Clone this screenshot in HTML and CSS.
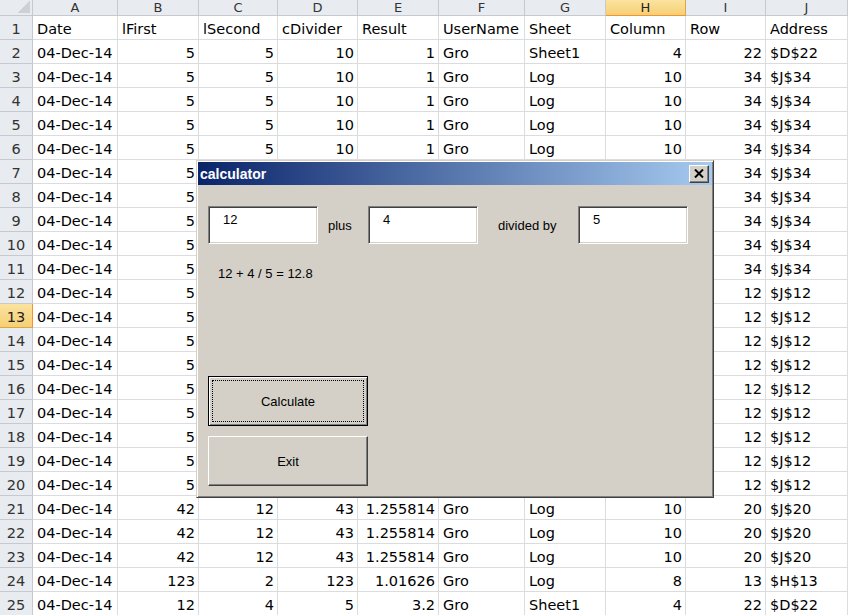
FILE: index.html
```html
<!DOCTYPE html>
<html lang="en">
<head>
    <meta charset="UTF-8">
    <meta name="viewport" content="width=device-width, initial-scale=1.0">
    <title>calculator</title>
    <link rel="stylesheet" href="styles.css">
</head>
<body>
    <div class="sheet">
        <div class="row"><div class="hd corner"></div><div class="hd">A</div><div class="hd">B</div><div class="hd">C</div><div class="hd">D</div><div class="hd">E</div><div class="hd">F</div><div class="hd">G</div><div class="hd sel">H</div><div class="hd">I</div><div class="hd">J</div></div>
        <div class="row"><div class="rh">1</div><div class="c">Date</div><div class="c">lFirst</div><div class="c">lSecond</div><div class="c">cDivider</div><div class="c">Result</div><div class="c">UserName</div><div class="c">Sheet</div><div class="c">Column</div><div class="c">Row</div><div class="c">Address</div></div>
        <div class="row"><div class="rh">2</div><div class="c">04-Dec-14</div><div class="c n">5</div><div class="c n">5</div><div class="c n">10</div><div class="c n">1</div><div class="c">Gro</div><div class="c">Sheet1</div><div class="c n">4</div><div class="c n">22</div><div class="c">$D$22</div></div>
        <div class="row"><div class="rh">3</div><div class="c">04-Dec-14</div><div class="c n">5</div><div class="c n">5</div><div class="c n">10</div><div class="c n">1</div><div class="c">Gro</div><div class="c">Log</div><div class="c n">10</div><div class="c n">34</div><div class="c">$J$34</div></div>
        <div class="row"><div class="rh">4</div><div class="c">04-Dec-14</div><div class="c n">5</div><div class="c n">5</div><div class="c n">10</div><div class="c n">1</div><div class="c">Gro</div><div class="c">Log</div><div class="c n">10</div><div class="c n">34</div><div class="c">$J$34</div></div>
        <div class="row"><div class="rh">5</div><div class="c">04-Dec-14</div><div class="c n">5</div><div class="c n">5</div><div class="c n">10</div><div class="c n">1</div><div class="c">Gro</div><div class="c">Log</div><div class="c n">10</div><div class="c n">34</div><div class="c">$J$34</div></div>
        <div class="row"><div class="rh">6</div><div class="c">04-Dec-14</div><div class="c n">5</div><div class="c n">5</div><div class="c n">10</div><div class="c n">1</div><div class="c">Gro</div><div class="c">Log</div><div class="c n">10</div><div class="c n">34</div><div class="c">$J$34</div></div>
        <div class="row"><div class="rh">7</div><div class="c">04-Dec-14</div><div class="c n">5</div><div class="c"></div><div class="c"></div><div class="c"></div><div class="c"></div><div class="c"></div><div class="c"></div><div class="c n">34</div><div class="c">$J$34</div></div>
        <div class="row"><div class="rh">8</div><div class="c">04-Dec-14</div><div class="c n">5</div><div class="c"></div><div class="c"></div><div class="c"></div><div class="c"></div><div class="c"></div><div class="c"></div><div class="c n">34</div><div class="c">$J$34</div></div>
        <div class="row"><div class="rh">9</div><div class="c">04-Dec-14</div><div class="c n">5</div><div class="c"></div><div class="c"></div><div class="c"></div><div class="c"></div><div class="c"></div><div class="c"></div><div class="c n">34</div><div class="c">$J$34</div></div>
        <div class="row"><div class="rh">10</div><div class="c">04-Dec-14</div><div class="c n">5</div><div class="c"></div><div class="c"></div><div class="c"></div><div class="c"></div><div class="c"></div><div class="c"></div><div class="c n">34</div><div class="c">$J$34</div></div>
        <div class="row"><div class="rh">11</div><div class="c">04-Dec-14</div><div class="c n">5</div><div class="c"></div><div class="c"></div><div class="c"></div><div class="c"></div><div class="c"></div><div class="c"></div><div class="c n">34</div><div class="c">$J$34</div></div>
        <div class="row"><div class="rh">12</div><div class="c">04-Dec-14</div><div class="c n">5</div><div class="c"></div><div class="c"></div><div class="c"></div><div class="c"></div><div class="c"></div><div class="c"></div><div class="c n">12</div><div class="c">$J$12</div></div>
        <div class="row"><div class="rh sel">13</div><div class="c">04-Dec-14</div><div class="c n">5</div><div class="c"></div><div class="c"></div><div class="c"></div><div class="c"></div><div class="c"></div><div class="c"></div><div class="c n">12</div><div class="c">$J$12</div></div>
        <div class="row"><div class="rh">14</div><div class="c">04-Dec-14</div><div class="c n">5</div><div class="c"></div><div class="c"></div><div class="c"></div><div class="c"></div><div class="c"></div><div class="c"></div><div class="c n">12</div><div class="c">$J$12</div></div>
        <div class="row"><div class="rh">15</div><div class="c">04-Dec-14</div><div class="c n">5</div><div class="c"></div><div class="c"></div><div class="c"></div><div class="c"></div><div class="c"></div><div class="c"></div><div class="c n">12</div><div class="c">$J$12</div></div>
        <div class="row"><div class="rh">16</div><div class="c">04-Dec-14</div><div class="c n">5</div><div class="c"></div><div class="c"></div><div class="c"></div><div class="c"></div><div class="c"></div><div class="c"></div><div class="c n">12</div><div class="c">$J$12</div></div>
        <div class="row"><div class="rh">17</div><div class="c">04-Dec-14</div><div class="c n">5</div><div class="c"></div><div class="c"></div><div class="c"></div><div class="c"></div><div class="c"></div><div class="c"></div><div class="c n">12</div><div class="c">$J$12</div></div>
        <div class="row"><div class="rh">18</div><div class="c">04-Dec-14</div><div class="c n">5</div><div class="c"></div><div class="c"></div><div class="c"></div><div class="c"></div><div class="c"></div><div class="c"></div><div class="c n">12</div><div class="c">$J$12</div></div>
        <div class="row"><div class="rh">19</div><div class="c">04-Dec-14</div><div class="c n">5</div><div class="c"></div><div class="c"></div><div class="c"></div><div class="c"></div><div class="c"></div><div class="c"></div><div class="c n">12</div><div class="c">$J$12</div></div>
        <div class="row"><div class="rh">20</div><div class="c">04-Dec-14</div><div class="c n">5</div><div class="c"></div><div class="c"></div><div class="c"></div><div class="c"></div><div class="c"></div><div class="c"></div><div class="c n">12</div><div class="c">$J$12</div></div>
        <div class="row"><div class="rh">21</div><div class="c">04-Dec-14</div><div class="c n">42</div><div class="c n">12</div><div class="c n">43</div><div class="c n">1.255814</div><div class="c">Gro</div><div class="c">Log</div><div class="c n">10</div><div class="c n">20</div><div class="c">$J$20</div></div>
        <div class="row"><div class="rh">22</div><div class="c">04-Dec-14</div><div class="c n">42</div><div class="c n">12</div><div class="c n">43</div><div class="c n">1.255814</div><div class="c">Gro</div><div class="c">Log</div><div class="c n">10</div><div class="c n">20</div><div class="c">$J$20</div></div>
        <div class="row"><div class="rh">23</div><div class="c">04-Dec-14</div><div class="c n">42</div><div class="c n">12</div><div class="c n">43</div><div class="c n">1.255814</div><div class="c">Gro</div><div class="c">Log</div><div class="c n">10</div><div class="c n">20</div><div class="c">$J$20</div></div>
        <div class="row"><div class="rh">24</div><div class="c">04-Dec-14</div><div class="c n">123</div><div class="c n">2</div><div class="c n">123</div><div class="c n">1.01626</div><div class="c">Gro</div><div class="c">Log</div><div class="c n">8</div><div class="c n">13</div><div class="c">$H$13</div></div>
        <div class="row"><div class="rh">25</div><div class="c">04-Dec-14</div><div class="c n">12</div><div class="c n">4</div><div class="c n">5</div><div class="c n">3.2</div><div class="c">Gro</div><div class="c">Sheet1</div><div class="c n">4</div><div class="c n">22</div><div class="c">$D$22</div></div>
    </div>

    <!-- userform floating over the worksheet -->
    <div class="dialog">
        <div class="titlebar">
            <span class="title">calculator</span>
            <div class="close">
                <svg width="10" height="9" viewBox="0 0 10 9">
                    <path d="M1 0.5 L9 8.5 M9 0.5 L1 8.5" stroke="#000" stroke-width="2" fill="none"/>
                </svg>
            </div>
        </div>
        <div class="dialog-body">
            <div class="inputs">
                <div class="textbox">12</div>
                <span class="label plus">plus</span>
                <div class="textbox">4</div>
                <span class="label divided">divided by</span>
                <div class="textbox">5</div>
            </div>
            <div class="result">12 + 4 / 5 = 12.8</div>
            <div class="btn default"><span class="focus">Calculate</span></div>
            <div class="btn exit">Exit</div>
        </div>
    </div>
</body>
</html>
```

FILE: styles.css
```css
body {
    margin: 0;
    background: #fff;
    font-family: "DejaVu Sans", sans-serif;
    overflow: hidden;
}

.sheet {
    display: grid;
    grid-template-columns: 33px 85px 81px 79px 80px 81px 86px 81px 80px 80px 82px;
    grid-template-rows: 16px;
    grid-auto-rows: 24px;
    font-size: 14.5px;
    color: #000;
}

.row {
    display: contents;
}

.c, .hd, .rh {
    box-sizing: border-box;
    border-right: 1px solid #dadcdd;
    border-bottom: 1px solid #dadcdd;
    white-space: nowrap;
    overflow: hidden;
}

.c {
    padding: 3px 3px 0 4px;
    line-height: 20px;
}

.c.n {
    text-align: right;
}

.hd {
    background: #e8ebef;
    border-color: #c6cad0;
    color: #333;
    font-size: 13px;
    line-height: 15px;
    text-align: center;
}

.hd.corner {
    background: linear-gradient(135deg, transparent 50%, #cdd1d7 50%) no-repeat right 2px bottom 2px / 12px 12px, #e8ebef;
}

.rh {
    background: #e8ebef;
    border-color: #c6cad0;
    color: #333;
    text-align: center;
    padding-top: 3px;
    line-height: 20px;
}

.hd.sel {
    background: linear-gradient(#fbe39f, #f6cf74);
    border-right-color: #d9a74a;
    border-bottom-color: #f29436;
    color: #222;
}

.rh.sel {
    background: linear-gradient(#fbe39f, #f6cf74);
    border-right-color: #f29436;
    border-bottom-color: #d9a74a;
    color: #222;
}

/* userform */

.dialog {
    position: absolute;
    left: 196px;
    top: 160px;
    width: 518px;
    height: 338px;
    box-sizing: border-box;
    padding: 1px;
    background: #d4d0c8;
    border: 1px solid;
    border-color: #d4d0c8 #404040 #404040 #d4d0c8;
    box-shadow: inset 1px 1px #fff, inset -1px -1px #808080;
    font-family: "Liberation Sans", Arial, sans-serif;
    font-size: 13px;
    color: #000;
}

.titlebar {
    display: flex;
    align-items: center;
    justify-content: space-between;
    height: 23px;
    padding: 0 3px 0 2px;
    background: linear-gradient(to right, #0a246a, #a6caf0);
}

.title {
    color: #fff;
    font-weight: bold;
    font-size: 14px;
}

.close {
    box-sizing: border-box;
    width: 20px;
    height: 18px;
    display: flex;
    align-items: center;
    justify-content: center;
    background: #d4d0c8;
    border: 1px solid;
    border-color: #fff #404040 #404040 #fff;
    box-shadow: inset -1px -1px #808080;
}

.dialog-body {
    padding: 21px 10px 0 10px;
}

.inputs {
    display: flex;
    align-items: center;
}

.textbox {
    box-sizing: border-box;
    width: 110px;
    height: 38px;
    padding: 5px 0 0 14px;
    line-height: 15px;
    background: #fff;
    border: 1px solid;
    border-color: #808080 #fff #fff #808080;
    box-shadow: inset 1px 1px #404040, inset -1px -1px #d4d0c8;
}

.label {
    box-sizing: border-box;
    line-height: 15px;
}

.label.plus {
    width: 50px;
    padding-left: 10px;
}

.label.divided {
    width: 100px;
    padding-left: 20px;
}

.result {
    margin-top: 22px;
    padding-left: 10px;
    line-height: 15px;
}

.btn {
    box-sizing: border-box;
    width: 160px;
    height: 50px;
    display: flex;
    align-items: center;
    justify-content: center;
    border: 1px solid;
    border-color: #fff #404040 #404040 #fff;
    box-shadow: inset -1px -1px #808080;
}

.btn.default {
    margin-top: 95px;
    padding: 3px;
    border-color: #000;
    box-shadow: inset 1px 1px #fff, inset -1px -1px #808080;
}

.focus {
    flex: 1;
    align-self: stretch;
    display: flex;
    align-items: center;
    justify-content: center;
    border: 1px dotted #000;
}

.btn.exit {
    margin-top: 10px;
}
```
